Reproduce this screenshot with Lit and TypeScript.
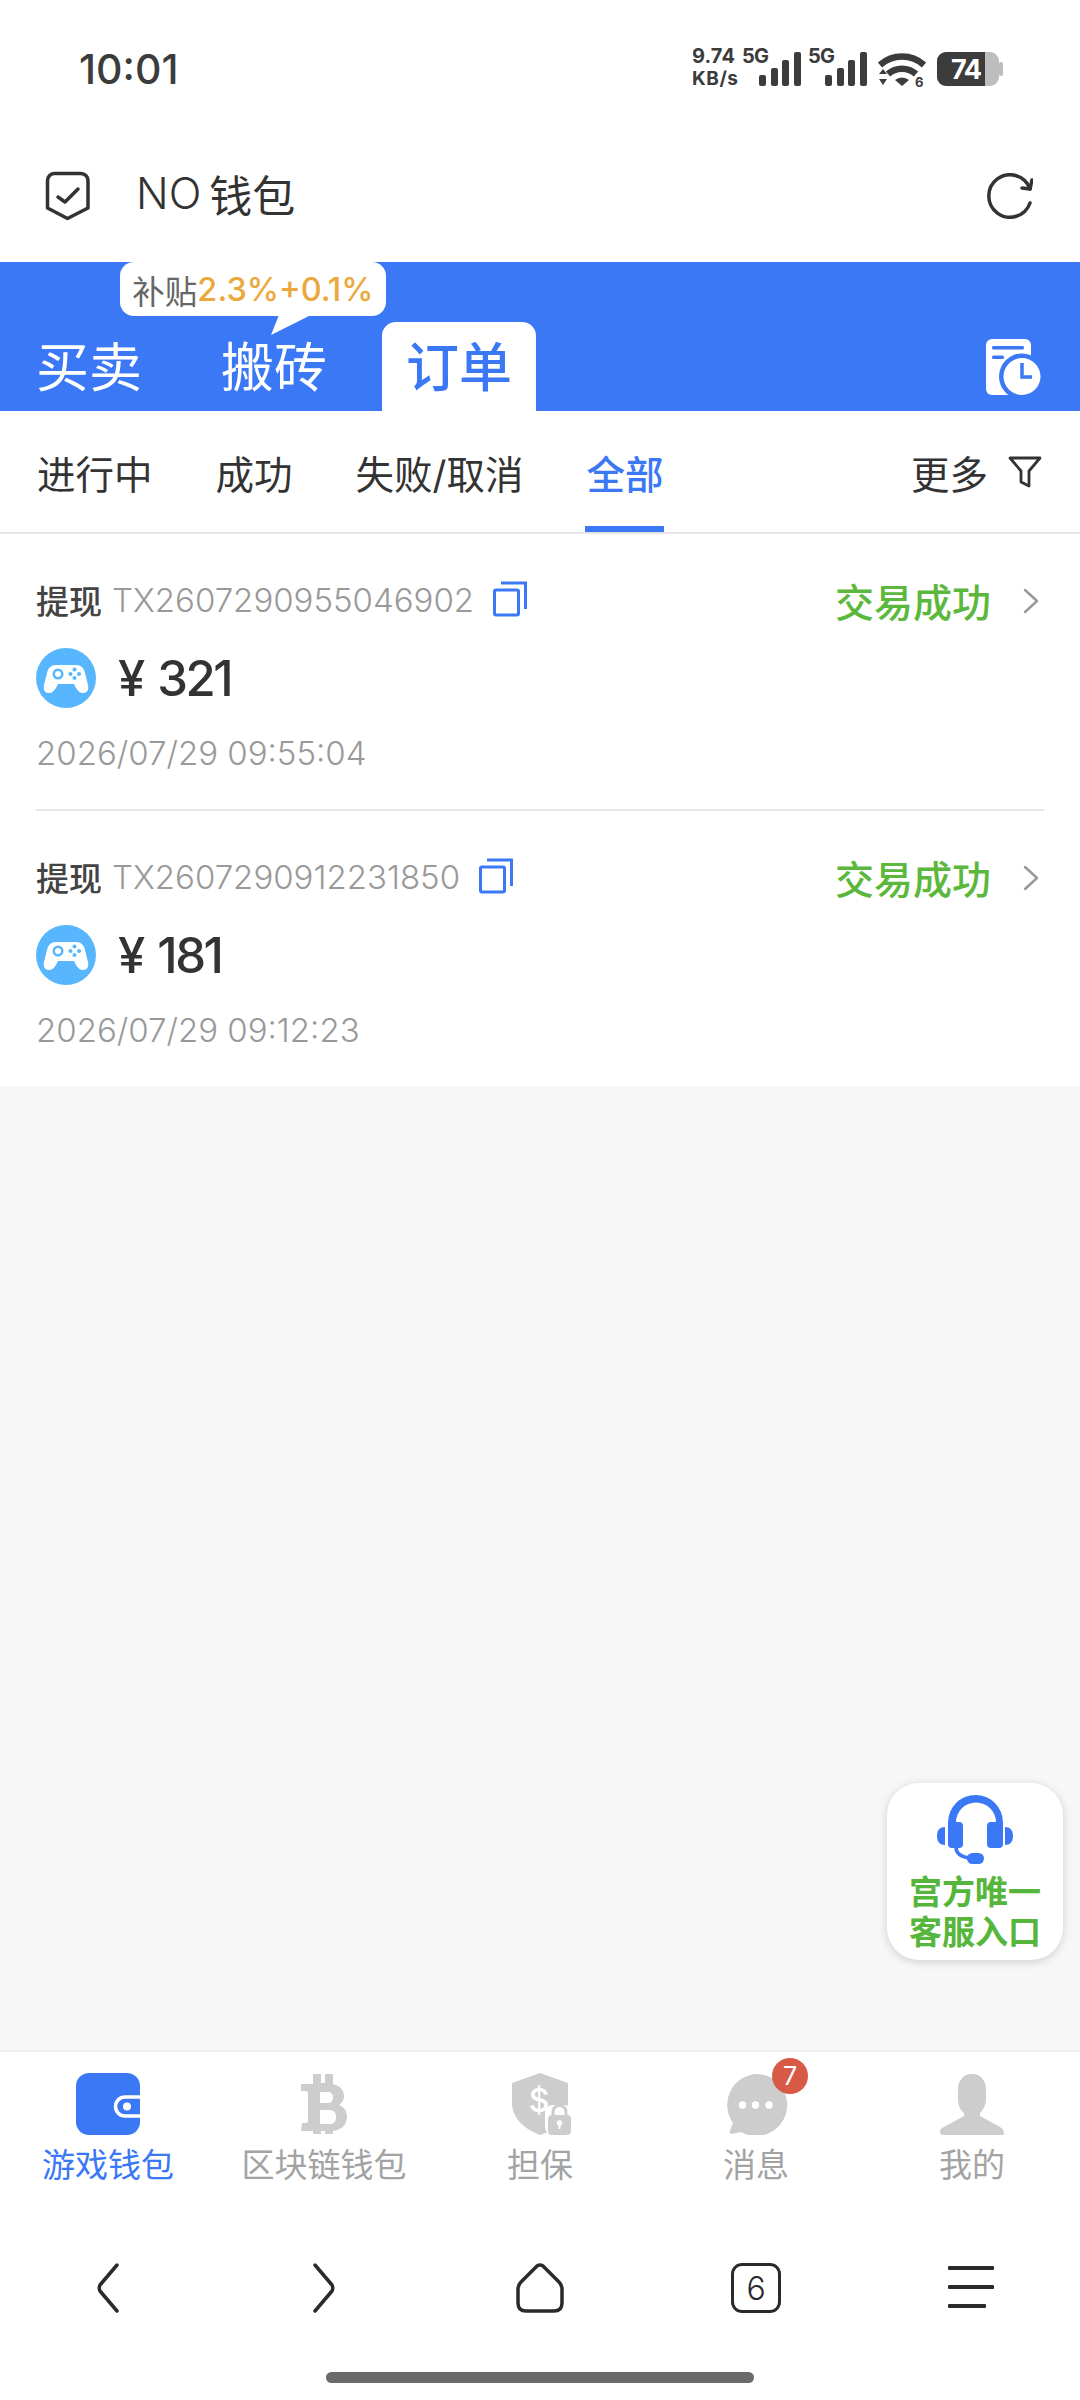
import { LitElement, html, css, svg } from "lit";
import { customElement } from "lit/decorators.js";

const orders = [
  { no: "TX2607290955046902", amount: "321", time: "2026/07/29 09:55:04" },
  { no: "TX2607290912231850", amount: "181", time: "2026/07/29 09:12:23" },
];

const icon = (w: number, h: number, body: unknown) => html`<svg width=${w} height=${h} viewBox="0 0 ${w} ${h}">${body}</svg>`;

const navItems = [
  {
    label: "游戏钱包",
    active: true,
    icon: icon(64, 62, svg`<rect width="64" height="62" rx="13" fill="#3b78f6"/>
      <path d="M64 24H49a9.500 9.500 0 0 0 0 19H64" fill="#3b78f6" stroke="#fff" stroke-width="3.500"/>
      <circle cx="51" cy="33.500" r="4" fill="#fff"/>`),
  },
  {
    label: "区块链钱包",
    icon: icon(46, 62, svg`<path fill="#cdcdcd" fill-rule="evenodd" d="M12 1h8v9h4V1h8v10c8 2 11 7 11 12 0 4-2 7-5 9 5 2 8 6 8 12 0 8-6 13-14 14v3h-8v-3h-4v3h-8v-3H0l1-8h4c1 0 2-1 2-2V20c0-1-1-2-2-2H0v-7h12zM19 19v11h8c3 0 5-2 5-5.500S30 19 27 19zM19 37v14h10c4 0 6-3 6-7s-2-7-6-7z"/>`),
  },
  {
    label: "担保",
    icon: icon(64, 62, svg`<path fill="#cdcdcd" d="M32 0l28 10v20c0 15-11 27-28 32C16 56 4 45 4 30V10z"/>
      <text x="31" y="39" text-anchor="middle" font-family="Inter, sans-serif" font-size="32" font-weight="500" fill="#fff">$</text>
      <rect x="37" y="32" width="27" height="30" rx="8" fill="#fff"/>
      <rect x="40" y="42" width="23" height="20" rx="4" fill="#cdcdcd"/>
      <path d="M45 42v-3a6.500 6.500 0 0 1 13 0v3" fill="none" stroke="#cdcdcd" stroke-width="3"/>
      <circle cx="51.500" cy="50" r="2.800" fill="#fff"/><rect x="50.500" y="51" width="2" height="5" fill="#fff"/>`),
  },
  {
    label: "消息",
    badge: "7",
    icon: icon(64, 62, svg`<path fill="#cdcdcd" d="M32 1a31 31 0 1 1-15 58l-9 2c-2 0-3-2-2-3.500l3-7.500A31 31 0 0 1 32 1z"/>
      <circle cx="18.500" cy="32" r="3.700" fill="#fff"/><circle cx="31.500" cy="32" r="3.700" fill="#fff"/><circle cx="45" cy="32" r="3.700" fill="#fff"/>`),
  },
  {
    label: "我的",
    icon: icon(64, 62, svg`<path fill="#cdcdcd" d="M32 1c10 0 14 8 14 15v10c0 6-3 11-6 14v3l20 11c3 2 4 4 4 6 0 2-1 2-3 2H4c-3 0-4-1-4-3 0-2 1-4 4-5l20-11v-3c-4-3-6-8-6-14V16C18 9 22 1 32 1z"/>`),
  },
];

@customElement("app-root")
export class AppRoot extends LitElement {
  static styles = css`
    :host {
      display: flex;
      flex-direction: column;
      width: 1080px;
      height: 2400px;
      position: relative;
      background: #fff;
      color: #333;
      font-family: Inter, "Noto Sans CJK SC", sans-serif;
      overflow: hidden;
    }
    svg { display: block; flex: none; }
    .status {
      height: 130px;
      flex: none;
      display: flex;
      justify-content: space-between;
      padding: 44px 77px 0 79px;
      box-sizing: border-box;
    }
    .time { font-size: 41px; line-height: 50px; font-weight: 500; color: #3c3c3c; }
    .header {
      height: 132px;
      flex: none;
      display: flex;
      align-items: center;
      padding: 0 47px 0 45px;
      box-sizing: border-box;
    }
    .title { flex: 1; margin: -7px 0 0 45px; font-size: 43px; font-weight: 400; color: #333; display: flex; gap: 8px; align-items: center; }
    .title span { font-weight: 300; font-size: 43px; }
    .band {
      height: 149px;
      flex: none;
      background: #3b78f6;
      display: flex;
      align-items: flex-end;
      position: relative;
      padding: 0 38px 0 12px;
      box-sizing: border-box;
    }
    .tabs { display: flex; gap: 31px; flex: 1; }
    .tab {
      width: 154px;
      height: 89px;
      box-sizing: border-box;
      padding-bottom: 6px;
      display: flex;
      align-items: center;
      justify-content: center;
      font-size: 53px;
      color: #fff;
      border-radius: 14px 14px 0 0;
      white-space: nowrap;
    }
    .tab.on { background: #fff; color: #3b78f6; font-weight: 500; }
    .band-icon { align-self: flex-end; margin-bottom: 16px; }
    .tip {
      position: absolute;
      left: 120px;
      top: 0;
      width: 266px;
      height: 54px;
      background: #fff;
      border-radius: 14px;
      display: flex;
      align-items: center;
      justify-content: center;
      font-size: 32.5px;
      color: #666;
      white-space: nowrap;
    }
    .tip b { font-weight: 500; color: #eba93d; }
    .tail { position: absolute; left: 271px; top: 53px; }
    .sub {
      height: 123px;
      flex: none;
      display: flex;
      align-items: stretch;
      gap: 63px;
      padding: 0 38px 0 37px;
      box-sizing: border-box;
      border-bottom: 2px solid #e6e6e6;
      font-size: 38.5px;
      color: #333;
    }
    .sub-item { display: flex; align-items: center; white-space: nowrap; }
    .sub-item.on { color: #3b78f6; font-weight: 500; position: relative; }
    .sub-item.on::after {
      content: "";
      position: absolute;
      left: -1px;
      right: -1px;
      bottom: 0;
      height: 6px;
      background: #3b78f6;
    }
    .more { margin-left: auto; display: flex; align-items: center; gap: 20px; }
    .list { flex: none; background: #fff; padding: 0 36px; }
    .order { height: 275px; box-sizing: border-box; padding-top: 46px; }
    .order + .order { border-top: 2px solid #e6e6e6; height: 277px; }
    .line1 { display: flex; align-items: center; height: 40px; }
    .kind { font-size: 33px; font-weight: 500; color: #444; }
    .no { font-size: 33px; color: #999; margin-left: 10px; font-weight: 300; }
    .copy { margin-left: 19px; margin-top: -3px; }
    .state { margin-left: auto; color: #5cb83c; font-size: 39px; font-weight: 500; }
    .chev { margin-left: 32px; margin-right: 5px; margin-top: 2px; }
    .amount { display: flex; align-items: center; height: 60px; margin-top: 28px; gap: 22px; }
    .money { font-size: 49px; font-weight: 500; color: #333; letter-spacing: -2.5px; word-spacing: 4px; }
    .date { font-size: 33px; color: #999; line-height: 40px; margin-top: 25px; font-weight: 300; }
    .fill { flex: 1; background: #f7f7f7; }
    .nav {
      height: 197px;
      flex: none;
      box-sizing: border-box;
      border-top: 2px solid #f0f0f0;
      display: grid;
      grid-template-columns: repeat(5, 1fr);
      padding-top: 21px;
    }
    .nav-item {
      position: relative;
      display: flex;
      flex-direction: column;
      align-items: center;
      font-size: 33px;
      color: #a3a3a3;
      gap: 6px;
      white-space: nowrap;
      line-height: 48px;
    }
    .nav-item.on { color: #3b78f6; }
    .badge {
      position: absolute;
      left: 124px;
      top: -15px;
      width: 36px;
      height: 36px;
      border-radius: 50%;
      background: #d75a47;
      color: #fff;
      font-size: 25px;
      line-height: 36px;
      text-align: center;
    }
    .browser {
      height: 82px;
      flex: none;
      display: grid;
      grid-template-columns: repeat(5, 1fr);
      align-items: center;
      justify-items: center;
    }
    .count {
      width: 50px;
      height: 50px;
      display: flex;
      align-items: center;
      justify-content: center;
      font-size: 32px;
      font-weight: 300;
      color: #2a2a2a;
      box-sizing: border-box;
      border: 3.5px solid #2a2a2a;
      border-radius: 11px;
    }
    .pill-wrap { height: 71px; flex: none; display: flex; justify-content: center; padding-top: 43px; box-sizing: border-box; }
    .pill { width: 428px; height: 11px; border-radius: 6px; background: #6a6a6a; }
    .float {
      position: absolute;
      left: 887px;
      top: 1783px;
      width: 176px;
      height: 177px;
      box-sizing: border-box;
      padding-top: 12px;
      border-radius: 32px;
      background: #fff;
      box-shadow: 0 2px 10px rgba(0, 0, 0, 0.16);
      display: flex;
      flex-direction: column;
      align-items: center;
      color: #56b63c;
      font-size: 33px;
      font-weight: 700;
      line-height: 40px;
      text-align: center;
    }
    .float svg { margin-bottom: 7px; }
  `;

  render() {
    return html`
      <div class="status">
        <div class="time">10:01</div>
        <svg width="310" height="50" viewBox="693 44 310 50">
          <g font-family="Inter, sans-serif" font-weight="700" fill="#3c3c3c">
            <text x="692" y="63" font-size="20" textLength="43">9.74</text>
            <text x="692" y="85" font-size="19" textLength="46">KB/s</text>
            <text x="742" y="63" font-size="20" textLength="27">5G</text>
            <text x="808" y="63" font-size="20" textLength="27">5G</text>
          </g>
          <g fill="#3c3c3c">
            <rect x="759" y="75" width="7" height="11" rx="2"/><rect x="771" y="68" width="7" height="18" rx="2"/><rect x="782" y="60" width="7" height="26" rx="2"/><rect x="794" y="52" width="7" height="34" rx="2"/>
            <rect x="825" y="75" width="7" height="11" rx="2"/><rect x="837" y="68" width="7" height="18" rx="2"/><rect x="848" y="60" width="7" height="26" rx="2"/><rect x="860" y="52" width="7" height="34" rx="2"/>
            <path d="M880 65a33 33 0 0 1 44 0" fill="none" stroke="#3c3c3c" stroke-width="6.500"/>
            <path d="M888 74a21 21 0 0 1 28 0" fill="none" stroke="#3c3c3c" stroke-width="6.500"/>
            <path d="M895 80a11 11 0 0 1 14 0l-7 6z"/>
            <path d="M879 74l4-5 4 5zM879 79h8l-4 6z"/>
            <text x="915" y="87" font-family="Inter, sans-serif" font-weight="700" font-size="13">6</text>
            <rect x="937" y="52" width="62" height="34" rx="9" fill="#bdbdbd"/>
            <rect x="999" y="62" width="4" height="14" rx="2" fill="#bdbdbd"/>
            <path d="M946 52h39v34h-39a9 9 0 0 1-9-9V61a9 9 0 0 1 9-9z"/>
            <text x="951" y="79" font-family="Inter, sans-serif" font-weight="700" font-size="27" fill="#fff" textLength="31">74</text>
          </g>
        </svg>
      </div>

      <div class="header">
        <svg width="46" height="50" viewBox="0 0 46 50" fill="none" stroke="#333" stroke-width="3.500" stroke-linejoin="round" stroke-linecap="round">
          <path d="M9 2.500H36a7 7 0 0 1 7 7V37L22.500 47.500 2.500 37V9.500a7 7 0 0 1 6.500-7z"/>
          <path d="M13 26l7 5 13-13"/>
        </svg>
        <div class="title"><span>NO</span>钱包</div>
        <svg width="46" height="46" viewBox="0 0 46 46" fill="none" stroke="#333" stroke-width="3.500" stroke-linecap="round" stroke-linejoin="round">
          <path d="M43 30A21.200 21.200 0 1 1 43 16"/>
          <path d="M35 15l8 1 2-9"/>
        </svg>
      </div>

      <div class="band">
        <div class="tabs">
          <div class="tab">买卖</div>
          <div class="tab">搬砖</div>
          <div class="tab on">订单</div>
        </div>
        <svg class="band-icon" width="56" height="56" viewBox="0 0 56 56">
          <rect width="45" height="56" rx="6" fill="#fff"/>
          <rect x="6" y="7" width="32" height="3.500" rx="1.500" fill="#3b78f6"/>
          <rect x="6" y="16.500" width="12" height="3.500" rx="1.500" fill="#3b78f6"/>
          <circle cx="36" cy="37.500" r="23" fill="#3b78f6"/>
          <circle cx="36" cy="37.500" r="18.500" fill="#fff"/>
          <path d="M36 24v14h10" fill="none" stroke="#3b78f6" stroke-width="3.500"/>
        </svg>
        <div class="tip">补贴<b>2.3%+0.1%</b></div>
        <svg class="tail" width="40" height="20" viewBox="0 0 40 20"><path d="M8 0h32L0 20z" fill="#fff"/></svg>
      </div>

      <div class="sub">
        <div class="sub-item">进行中</div>
        <div class="sub-item">成功</div>
        <div class="sub-item">失败/取消</div>
        <div class="sub-item on">全部</div>
        <div class="sub-item more">更多
          <svg width="34" height="32" viewBox="0 0 34 32" fill="none" stroke="#333" stroke-width="2.800" stroke-linejoin="round"><path d="M2 2h30L21 15v15l-8-4V15z"/></svg>
        </div>
      </div>

      <div class="list">
        ${orders.map(
          (o) => html`
            <div class="order">
              <div class="line1">
                <span class="kind">提现</span>
                <span class="no">${o.no}</span>
                <svg class="copy" width="34" height="36" viewBox="0 0 34 36" fill="none" stroke="#3b78f6" stroke-width="3">
                  <rect x="1.500" y="9" width="24" height="25" rx="1.500"/>
                  <path d="M8 2h24.500v26"/>
                </svg>
                <span class="state">交易成功</span>
                <svg class="chev" width="16" height="26" viewBox="0 0 16 26" fill="none" stroke="#999" stroke-width="2.500" stroke-linecap="round" stroke-linejoin="round"><path d="M2 2l12 11L2 24"/></svg>
              </div>
              <div class="amount">
                <svg width="60" height="60" viewBox="0 0 60 60">
                  <circle cx="30" cy="30" r="30" fill="#57b6fd"/>
                  <path fill="#fff" d="M20 17h20c5 0 8 3 9 8l3 12c1 5-1 8-5 8-3 0-5-2-7-5l-2-4H22l-2 4c-2 3-4 5-7 5-4 0-6-3-5-8l3-12c1-5 4-8 9-8z"/>
                  <circle cx="22" cy="26" r="5.500" fill="#57b6fd"/>
                  <circle cx="22" cy="26" r="3" fill="#fff"/>
                  <g fill="#57b6fd"><circle cx="38.500" cy="21.500" r="2"/><circle cx="38.500" cy="30" r="2"/><circle cx="34.500" cy="26" r="2"/><circle cx="43" cy="26" r="2"/></g>
                </svg>
                <span class="money">¥ ${o.amount}</span>
              </div>
              <div class="date">${o.time}</div>
            </div>
          `
        )}
      </div>

      <div class="fill"></div>

      <div class="nav">
        ${navItems.map(
          (n) => html`
            <div class="nav-item ${n.active ? "on" : ""}">
              ${n.icon}
              <span>${n.label}</span>
              ${n.badge ? html`<span class="badge">${n.badge}</span>` : ""}
            </div>
          `
        )}
      </div>

      <div class="browser">
        <svg width="24" height="50" viewBox="0 0 24 50" fill="none" stroke="#2a2a2a" stroke-width="3.500" stroke-linecap="round" stroke-linejoin="round"><path d="M21 2L4 22q-1.500 3 0 6l17 20"/></svg>
        <svg width="24" height="50" viewBox="0 0 24 50" fill="none" stroke="#2a2a2a" stroke-width="3.500" stroke-linecap="round" stroke-linejoin="round"><path d="M3 2l17 20q1.500 3 0 6L3 48"/></svg>
        <svg width="48" height="50" viewBox="0 0 48 50" fill="none" stroke="#2a2a2a" stroke-width="3.500" stroke-linejoin="round"><path d="M21 3q3-2 6 0l16 16q3 3 3 7v14q0 8-8 8H10q-8 0-8-8V26q0-4 3-7z"/></svg>
        <div class="count">6</div>
        <svg width="48" height="44" viewBox="0 0 48 44" fill="#2a2a2a"><rect y="0" width="46" height="4" rx="1"/><rect y="19" width="46" height="4" rx="1"/><rect y="38" width="38" height="4" rx="1"/></svg>
      </div>

      <div class="pill-wrap"><div class="pill"></div></div>

      <div class="float">
        <svg width="76" height="70" viewBox="0 0 76 70">
          <path d="M11 40V27.500a27.500 27.500 0 0 1 55 0V40h-7V27.500a20 20 0 0 0-40 0V40z" fill="#3b78f6"/>
          <rect x="11" y="27" width="15" height="26" rx="4" fill="#3b78f6"/>
          <rect x="50" y="27" width="16" height="26" rx="4" fill="#3b78f6"/>
          <path d="M0 41c0-6 3-9 8-9v18c-5 0-8-3-8-9zM76 41c0-6-3-9-8-9v18c5 0 8-3 8-9z" fill="#3b78f6"/>
          <path d="M19 52c0 7 5 10 14 11" fill="none" stroke="#3b78f6" stroke-width="3.500"/>
          <rect x="30" y="58" width="17" height="11" rx="5.500" fill="#3b78f6"/>
        </svg>
        <div>宫方唯一<br />客服入口</div>
      </div>
    `;
  }
}
